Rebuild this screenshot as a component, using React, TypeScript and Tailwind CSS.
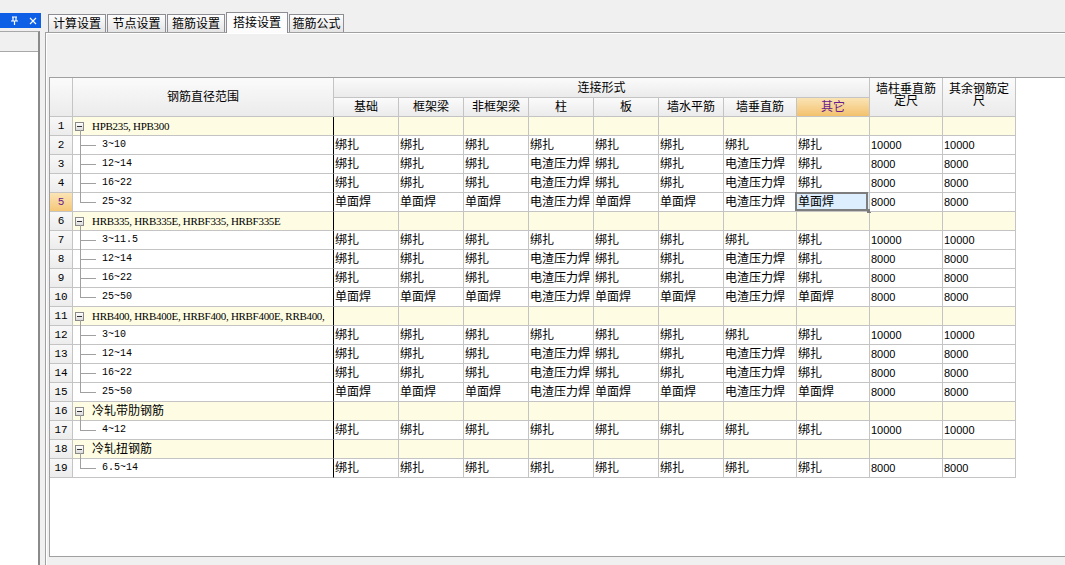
import React from 'react';

type Row = {
  n: number;
  group?: string;
  cjk?: boolean;
  label?: string;
  last?: boolean;
  vals?: string[];
};

const tie = (d: string) => ['绑扎', '绑扎', '绑扎', '绑扎', '绑扎', '绑扎', '绑扎', '绑扎', d, d];
const mid = ['绑扎', '绑扎', '绑扎', '电渣压力焊', '绑扎', '绑扎', '电渣压力焊', '绑扎', '8000', '8000'];
const big = ['单面焊', '单面焊', '单面焊', '电渣压力焊', '单面焊', '单面焊', '电渣压力焊', '单面焊', '8000', '8000'];

const rows: Row[] = [
  { n: 1, group: 'HPB235, HPB300' },
  { n: 2, label: '3~10', vals: tie('10000') },
  { n: 3, label: '12~14', vals: mid },
  { n: 4, label: '16~22', vals: mid },
  { n: 5, label: '25~32', vals: big, last: true },
  { n: 6, group: 'HRB335, HRB335E, HRBF335, HRBF335E' },
  { n: 7, label: '3~11.5', vals: tie('10000') },
  { n: 8, label: '12~14', vals: mid },
  { n: 9, label: '16~22', vals: mid },
  { n: 10, label: '25~50', vals: big, last: true },
  { n: 11, group: 'HRB400, HRB400E, HRBF400, HRBF400E, RRB400,' },
  { n: 12, label: '3~10', vals: tie('10000') },
  { n: 13, label: '12~14', vals: mid },
  { n: 14, label: '16~22', vals: mid },
  { n: 15, label: '25~50', vals: big, last: true },
  { n: 16, group: '冷轧带肋钢筋', cjk: true },
  { n: 17, label: '4~12', vals: tie('10000'), last: true },
  { n: 18, group: '冷轧扭钢筋', cjk: true },
  { n: 19, label: '6.5~14', vals: tie('8000'), last: true },
];

const subHeads = ['基础', '框架梁', '非框架梁', '柱', '板', '墙水平筋', '墙垂直筋', '其它'];

const line = 'border-r border-b border-[#c4c4c4]';
const head = `${line} bg-linear-to-b from-[#fbfbfb] to-[#ebebeb] flex items-center justify-center text-[12px] text-black`;

const Tab = ({ label, w, active }: { label: string; w: string; active?: boolean }) => (
  <div
    className={`${w} flex items-center justify-center border border-b-0 border-[#8c8e94] text-[12px] leading-none ${
      active
        ? 'relative z-10 -mb-px h-[21px] bg-[#fcfcfc]'
        : 'h-[18px] bg-linear-to-b from-[#fdfdfd] to-[#e4e4e4]'
    }`}
  >
    {label}
  </div>
);

const ExpandBox = () => (
  <div className="flex h-[9px] w-[9px] shrink-0 items-center justify-center border border-[#8a8a8a] bg-linear-to-b from-[#ffffff] to-[#dcdcdc]">
    <div className="h-px w-[5px] bg-[#333]" />
  </div>
);

const RangeCell = ({ row }: { row: Row }) => {
  if (row.group) {
    return (
      <div className="relative flex items-center border-r border-b border-r-black border-b-[#c4c4c4] bg-[#fefde3] pl-[2px]">
        <ExpandBox />
        <span className="absolute left-[7px] top-[13px] bottom-[-1px] w-px bg-[#a0a0a0]" />
        <span
          className={`ml-[8px] whitespace-nowrap ${
            row.cjk
              ? 'text-[12px]'
              : "font-['Liberation_Serif',serif] text-[11px] tracking-[-0.3px]"
          }`}
        >
          {row.group}
        </span>
      </div>
    );
  }
  return (
    <div className="relative flex items-center border-r border-b border-r-black border-b-[#c4c4c4] bg-white pl-[29px]">
      <span
        className={`absolute left-[7px] top-0 w-px bg-[#a0a0a0] ${row.last ? 'h-[10px]' : 'bottom-[-1px]'}`}
      />
      <span className="absolute left-[7px] top-[9px] h-px w-[16px] bg-[#a0a0a0]" />
      <span className="font-['Liberation_Mono',monospace] text-[10px]">{row.label}</span>
    </div>
  );
};

const App = () => {
  return (
    <div className="flex h-[565px] w-[1065px] overflow-hidden bg-[#f0f0f0] font-['Liberation_Sans','Noto_Sans_CJK_SC',sans-serif] text-black">
      {/* left dock panel */}
      <div className="flex w-[41px] shrink-0 flex-col pt-[13px]">
        <div className="flex h-[15px] items-center bg-[#0d60e6] pl-[10px]">
          <svg width="9" height="10" viewBox="0 0 9 10" className="text-white">
            <path d="M2 1h5M3 1v4M6 1v4M1 5h7M4.5 5v4" stroke="currentColor" strokeWidth="1.2" fill="none" />
          </svg>
          <svg width="8" height="8" viewBox="0 0 8 8" className="ml-[10px] text-white">
            <path d="M1 1l6 6M7 1L1 7" stroke="currentColor" strokeWidth="1.1" fill="none" />
          </svg>
        </div>
        <div className="mt-[3px] flex w-[40px] flex-1 flex-col border-t border-r-2 border-t-[#a8a8a8] border-r-[#8a8a8a]">
          <div className="h-[20px] border-b border-[#a8a8a8] bg-[#f0f0f0]" />
          <div className="flex-1 bg-white" />
        </div>
      </div>

      {/* main area */}
      <div className="ml-[4px] flex flex-1 flex-col">
        <div className="flex h-[32px] items-end gap-[1px] pl-[3px]">
          <Tab label="计算设置" w="w-[58px]" />
          <Tab label="节点设置" w="w-[59px]" />
          <Tab label="箍筋设置" w="w-[58px]" />
          <Tab label="搭接设置" w="w-[62px]" active />
          <Tab label="箍筋公式" w="w-[55px]" />
        </div>

        <div className="flex-1 border-t border-l border-[#a0a0a0]">
          <div className="h-full border-t border-l border-white pt-[43px] pl-[2px]">
            <div className="h-[480px] border-t border-b border-l border-[#a0a0a0] bg-white">
              <div className="grid grid-cols-[23px_261px_65px_65px_65px_65px_65px_65px_73px_73px_73px_73px] grid-rows-[20px_19px] auto-rows-[19px] leading-[18px]">
                <div className={`${head} row-span-2`} />
                <div className={`${head} row-span-2`}>钢筋直径范围</div>
                <div className={`${head} col-span-8`}>连接形式</div>
                <div className={`${head} row-span-2 flex-col pb-[4px] leading-[12px]`}>
                  <span>墙柱垂直筋</span>
                  <span>定尺</span>
                </div>
                <div className={`${head} row-span-2 flex-col pb-[4px] leading-[12px]`}>
                  <span>其余钢筋定</span>
                  <span>尺</span>
                </div>
                {subHeads.map((h) =>
                  h === '其它' ? (
                    <div
                      key={h}
                      className={`${line} flex items-center justify-center bg-linear-to-b from-[#fae4b4] to-[#f3c16c] text-[12px] text-[#6a1b8e]`}
                    >
                      {h}
                    </div>
                  ) : (
                    <div key={h} className={head}>
                      {h}
                    </div>
                  )
                )}

                {rows.map((row) => (
                  <React.Fragment key={row.n}>
                    <div
                      className={`${line} flex items-center justify-center font-['Liberation_Mono',monospace] text-[11px] ${
                        row.n === 5
                          ? 'bg-linear-to-b from-[#fbe4b5] to-[#f5c778] text-[#6a1b8e]'
                          : 'bg-linear-to-b from-[#f8f8f8] to-[#ececec]'
                      }`}
                    >
                      {row.n}
                    </div>
                    <RangeCell row={row} />
                    {row.group
                      ? Array.from({ length: 10 }).map((_, i) => (
                          <div key={i} className={`${line} bg-[#fefde3]`} />
                        ))
                      : row.vals!.map((v, i) => {
                          const selected = row.n === 5 && i === 7;
                          return (
                            <div
                              key={i}
                              className={`${line} relative overflow-visible whitespace-nowrap pl-[1px] ${
                                i >= 8 ? 'text-[11px]' : 'text-[12px]'
                              } ${selected ? 'bg-[#ddeeff]' : 'bg-white'}`}
                            >
                              {v}
                              {selected && (
                                <>
                                  <span className="pointer-events-none absolute left-[-2px] top-[-1px] right-px bottom-0 border-2 border-[#7d7d7d]" />
                                  <span className="absolute right-[-2px] bottom-[-2px] h-[4px] w-[4px] bg-[#7d7d7d]" />
                                </>
                              )}
                            </div>
                          );
                        })}
                  </React.Fragment>
                ))}
              </div>
            </div>
          </div>
        </div>
      </div>
    </div>
  );
};

export default App;
